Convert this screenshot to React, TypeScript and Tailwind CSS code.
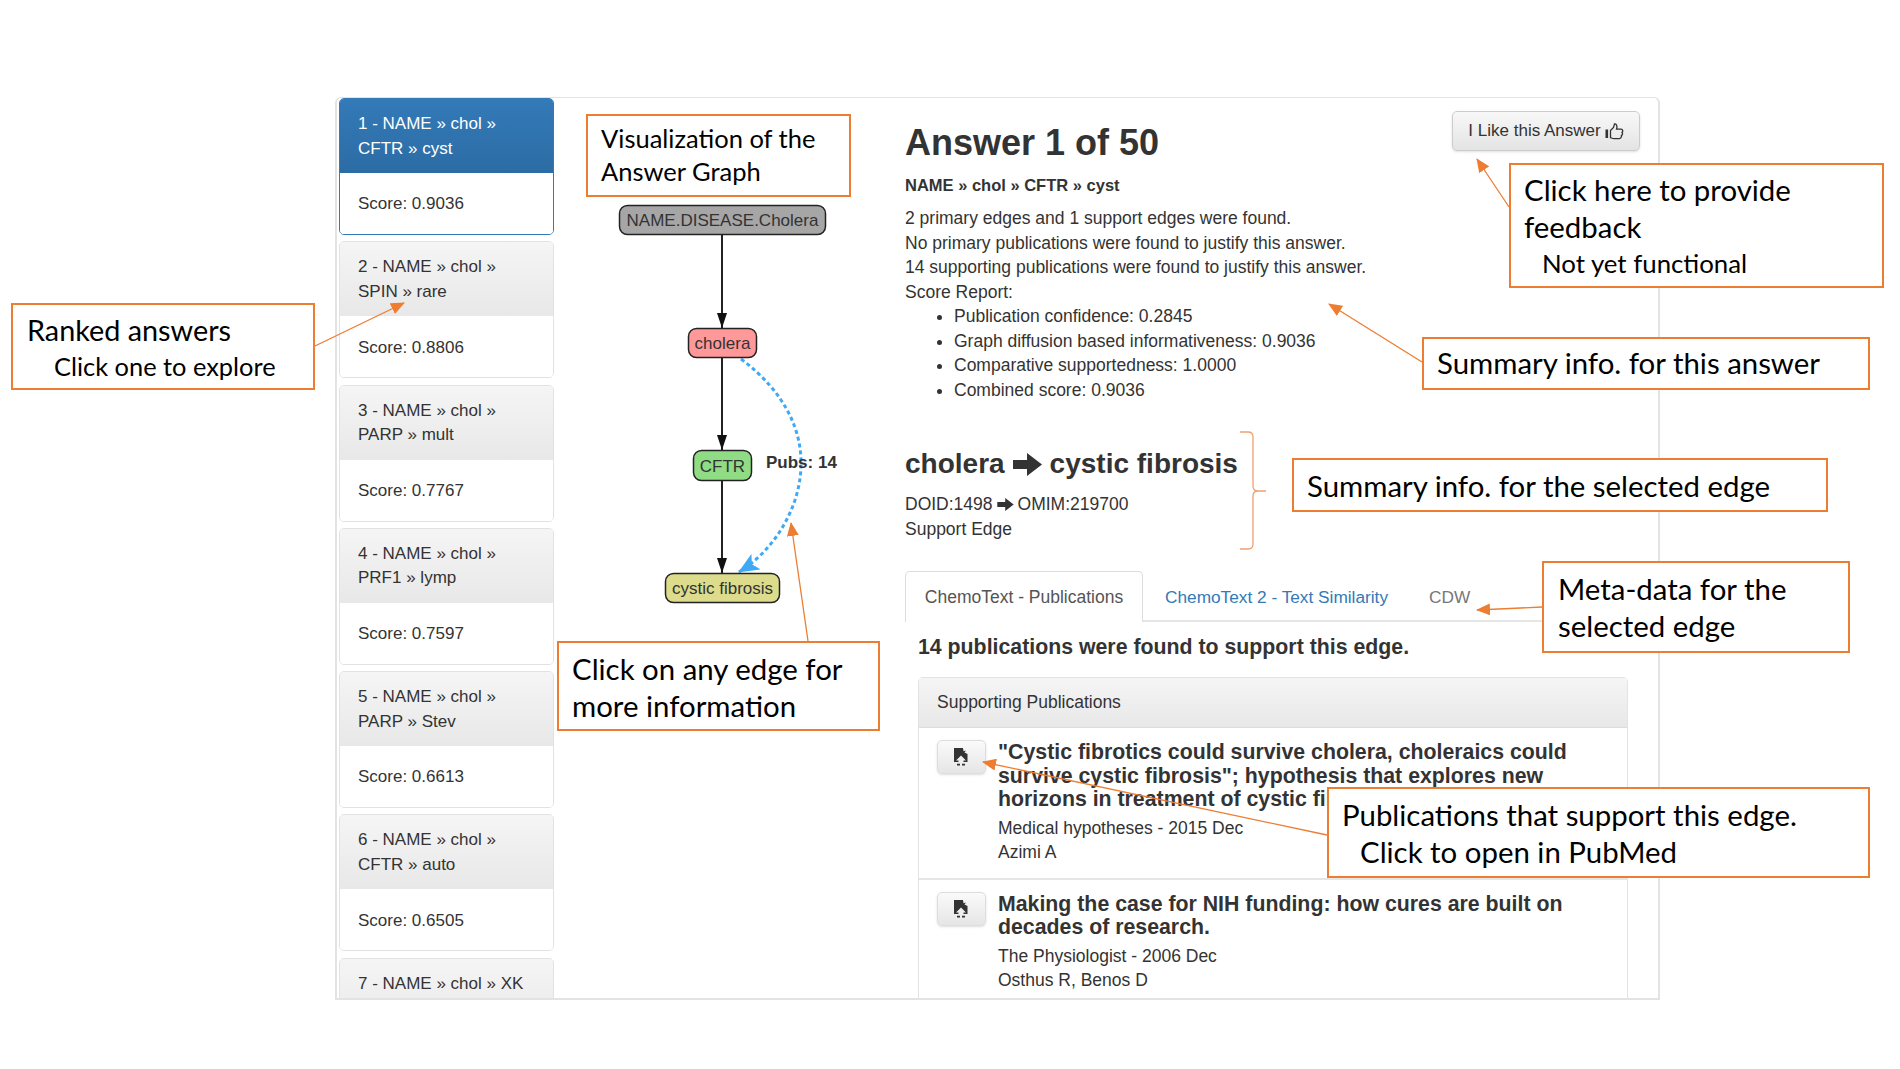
const ANSWERS = [
  { lines: ["1 - NAME » chol »", "CFTR » cyst"], score: "0.9036", active: true },
  { lines: ["2 - NAME » chol »", "SPIN » rare"], score: "0.8806" },
  { lines: ["3 - NAME » chol »", "PARP » mult"], score: "0.7767" },
  { lines: ["4 - NAME » chol »", "PRF1 » lymp"], score: "0.7597" },
  { lines: ["5 - NAME » chol »", "PARP » Stev"], score: "0.6613" },
  { lines: ["6 - NAME » chol »", "CFTR » auto"], score: "0.6505" },
  { lines: ["7 - NAME » chol » XK"] },
];

const PUBS = [
  {
    title: ['"Cystic fibrotics could survive cholera, choleraics could', 'survive cystic fibrosis"; hypothesis that explores new', "horizons in treatment of cystic fibrosis."],
    source: "Medical hypotheses - 2015 Dec",
    authors: "Azimi A",
  },
  {
    title: ["Making the case for NIH funding: how cures are built on", "decades of research."],
    source: "The Physiologist - 2006 Dec",
    authors: "Osthus R, Benos D",
  },
];

function AnswerCard({ lines, score, active }: { lines: string[]; score?: string; active?: boolean }) {
  return (
    <div
      className={`h-[137px] shrink-0 mb-[6.3px] flex flex-col rounded-[5px] border overflow-hidden ${
        active ? "border-[#337ab7]" : "border-[#e2e2e2]"
      }`}
    >
      <div
        className={`h-[74px] shrink-0 px-[18px] pt-[13px] leading-[24.5px] ${
          active ? "bg-gradient-to-b from-[#337ab7] to-[#2c6ca5] text-white" : "bg-gradient-to-b from-[#f5f5f5] to-[#e8e8e8] text-[#333]"
        }`}
      >
        {lines.map((l) => (
          <div key={l}>{l}</div>
        ))}
      </div>
      {score && <div className="flex-1 flex items-center px-[18px] pt-[2px] bg-white text-[#333]">Score: {score}</div>}
    </div>
  );
}

function AnswerGraph() {
  return (
    <svg className="block" width="351" height="520" viewBox="554 98 351 520" fontFamily="Liberation Sans, Arial, sans-serif">
      <defs>
        <marker id="blk" markerUnits="userSpaceOnUse" markerWidth="16" markerHeight="10" refX="15" refY="5" orient="auto">
          <path d="M0 0L15 5L0 10Z" fill="#111" />
        </marker>
        <marker id="blu" markerUnits="userSpaceOnUse" markerWidth="22" markerHeight="18" refX="20" refY="9" orient="auto">
          <path d="M0 0L21 9L0 18L5 9Z" fill="#3fa9f5" />
        </marker>
      </defs>
      <path d="M722 235V328" stroke="#222" strokeWidth="2" markerEnd="url(#blk)" />
      <path d="M722 358V450" stroke="#222" strokeWidth="2" markerEnd="url(#blk)" />
      <path d="M722 480V573" stroke="#222" strokeWidth="2" markerEnd="url(#blk)" />
      <path d="M741 359C785 392 802 430 801 466C800 510 772 552 739 572" fill="none" stroke="#3fa9f5" strokeWidth="3" strokeDasharray="4 3" markerEnd="url(#blu)" />
      <rect x="619.5" y="205.5" width="206" height="29" rx="8" fill="#a6a6a6" stroke="#222" strokeWidth="1.5" />
      <text x="722.5" y="226" textAnchor="middle" fontSize="17" fill="#333">NAME.DISEASE.Cholera</text>
      <rect x="688.5" y="328.5" width="68" height="29" rx="8" fill="#ff9999" stroke="#222" strokeWidth="1.5" />
      <text x="722.5" y="349" textAnchor="middle" fontSize="17" fill="#333">cholera</text>
      <rect x="693.5" y="450.5" width="58" height="30" rx="8" fill="#90dc85" stroke="#222" strokeWidth="1.5" />
      <text x="722.5" y="471.5" textAnchor="middle" fontSize="17" fill="#333">CFTR</text>
      <rect x="665.5" y="573.5" width="114" height="29" rx="8" fill="#dcdc8c" stroke="#222" strokeWidth="1.5" />
      <text x="722.5" y="594" textAnchor="middle" fontSize="17" fill="#333">cystic fibrosis</text>
      <text x="766" y="468" fontSize="17" fontWeight="700" fill="#333">Pubs: 14</text>
    </svg>
  );
}

function PubIcon() {
  return (
    <svg className="mr-[2px]" width="14" height="18" viewBox="0 0 14 18">
      <path d="M0 0H9L9.5 3.2L12 2.5L10.5 4.5L13.5 6V14H0Z" fill="#333" />
      <path d="M7 7.5L12 12.5H9.5V15H4.5V12.5H2Z" fill="#efefef" />
      <path d="M3 15.8H6V17.5H3ZM8 15.8H11V17.5H8Z" fill="#333" />
    </svg>
  );
}

function ThumbIcon() {
  return (
    <svg width="19" height="17" viewBox="0 0 19 17" fill="none" stroke="#333" strokeWidth="1.3">
      <rect x="0.5" y="6.5" width="2.6" height="8.5" fill="#333" stroke="none" />
      <path d="M5.5 7.5L8.5 4.5L9.5 1C11.5 0.5 12.5 3 11.5 6.2H16C18 6.2 18.2 8.5 17 9.2C18 10.2 17.5 12 16.4 12.4C16.8 13.8 15.8 15.6 14.4 15.6H9C7 15.6 6.5 14.6 5.5 14.6Z" />
    </svg>
  );
}

// Block arrow used between the two ends of an edge
function EdgeArrow({ className }: { className: string }) {
  return (
    <svg className={`inline-block ${className}`} viewBox="0 0 29 23" fill="#333">
      <path d="M0 7H14V0L29 11.5L14 23V16H0Z" />
    </svg>
  );
}

function Note({ className, children }: { className: string; children: React.ReactNode }) {
  return (
    <div className={`absolute bg-white border-2 border-[#ed7d31] text-black font-['Lato',sans-serif] text-[29.4px] leading-[37px] whitespace-nowrap ${className}`}>
      {children}
    </div>
  );
}

function Callouts() {
  const arrows = [
    "M315 346L404 303",
    "M808 641L791 523",
    "M1509 207L1477 159",
    "M1422 362L1329 304",
    "M1542 607L1477 610",
    "M1327 835L983 762",
  ];
  return (
    <svg className="absolute left-0 top-0 pointer-events-none" width="1900" height="1069" viewBox="0 0 1900 1069">
      <defs>
        <marker id="org" markerUnits="userSpaceOnUse" markerWidth="14" markerHeight="12" refX="13" refY="6" orient="auto">
          <path d="M0 0L14 6L0 12Z" fill="#ed7d31" />
        </marker>
      </defs>
      {arrows.map((d) => (
        <path key={d} d={d} stroke="#ed7d31" strokeWidth="1.3" fill="none" markerEnd="url(#org)" />
      ))}
      {/* Brace around the edge summary */}
      <path d="M1240 432H1248Q1253 432 1253 437V486Q1253 491 1258 491H1266M1258 491Q1253 491 1253 496V544Q1253 549 1248 549H1240" stroke="#f0a070" strokeWidth="1.3" fill="none" />
    </svg>
  );
}

export default function App() {
  return (
    <div className="relative w-[1900px] h-[1069px] bg-white overflow-hidden font-['Liberation_Sans',Arial,sans-serif] text-[17px] leading-[24.5px] text-[#333]">
      <div className="pt-[97px] pl-[335px]">
        <div className="w-[1325px] h-[903px] flex border-x-2 border-b-2 border-t border-[#e3e3e3] rounded-t-[6px] overflow-hidden">
          {/* Answers */}
          <aside className="w-[217px] shrink-0 pl-[2px] flex flex-col">
            {ANSWERS.map((a) => (
              <AnswerCard key={a.lines[0]} {...a} />
            ))}
          </aside>

          {/* Graph */}
          <div className="w-[351px] shrink-0">
            <AnswerGraph />
          </div>

          {/* Detail */}
          <main className="w-[735px] shrink-0 text-[17.5px]">
            <div className="flex justify-between items-start pt-[13px]">
              <h1 className="mt-[12px] text-[36px] leading-[40px] font-bold">Answer 1 of 50</h1>
              <button className="h-[40px] w-[188px] flex items-center justify-center gap-[4px] rounded-[5px] border border-[#ccc] bg-gradient-to-b from-[#f8f8f8] to-[#e4e4e4] shadow-sm text-[17px]">
                I Like this Answer
                <ThumbIcon />
              </button>
            </div>
            <p className="mt-[10px] text-[16.5px] font-bold">NAME » chol » CFTR » cyst</p>
            <div className="mt-[8.5px]">
              <p>2 primary edges and 1 support edges were found.</p>
              <p>No primary publications were found to justify this answer.</p>
              <p>14 supporting publications were found to justify this answer.</p>
              <p>Score Report:</p>
              <ul className="list-disc pl-[49px]">
                <li>Publication confidence: 0.2845</li>
                <li>Graph diffusion based informativeness: 0.9036</li>
                <li>Comparative supportedness: 1.0000</li>
                <li>Combined score: 0.9036</li>
              </ul>
            </div>

            <h2 className="mt-[45px] text-[28px] leading-[34px] font-bold flex items-center">
              cholera
              <EdgeArrow className="w-[29px] h-[23px] mx-[8px]" />
              cystic fibrosis
            </h2>
            <p className="mt-[11px] flex items-center">
              DOID:1498
              <EdgeArrow className="w-[17px] h-[13px] mx-[4px]" />
              OMIM:219700
            </p>
            <p>Support Edge</p>

            {/* Tabs */}
            <div className="mt-[30px] w-[723px] h-[51px] flex border-b-2 border-[#e6e6e6]">
              <div className="w-[238px] h-[51px] flex items-center justify-center rounded-t-[5px] border-x border-t border-[#ddd] bg-white text-[#555]">
                ChemoText - Publications
              </div>
              <div className="ml-[22px] pt-[3px] flex items-center text-[17.25px] text-[#337ab7]">ChemoText 2 - Text Similarity</div>
              <div className="ml-[41px] pt-[3px] flex items-center text-[17.25px] text-[#777]">CDW</div>
            </div>

            <p className="mt-[11px] ml-[13px] text-[21.3px] leading-[28px] font-bold">14 publications were found to support this edge.</p>

            {/* Publications */}
            <div className="mt-[16px] ml-[13px] w-[710px] border-x border-t border-[#e3e3e3] rounded-t-[5px]">
              <div className="h-[50px] flex items-center px-[18px] bg-gradient-to-b from-[#f5f5f5] to-[#e8e8e8] border-b border-[#ddd]">
                Supporting Publications
              </div>
              {PUBS.map((p) => (
                <div key={p.source} className="flex pl-[18px] pt-[12px] pb-[13px] border-b-2 border-[#e6e6e6]">
                  <button className="w-[49px] h-[34px] shrink-0 flex items-center justify-center rounded-[5px] border border-[#ddd] bg-gradient-to-b from-[#fafafa] to-[#e6e6e6] shadow-sm">
                    <PubIcon />
                  </button>
                  <div className="ml-[12px] pt-[1px]">
                    <div className="text-[21.3px] leading-[23.5px] font-bold whitespace-nowrap">
                      {p.title.map((t) => (
                        <div key={t}>{t}</div>
                      ))}
                    </div>
                    <div className="mt-[4px]">
                      <p>{p.source}</p>
                      <p>{p.authors}</p>
                    </div>
                  </div>
                </div>
              ))}
            </div>
          </main>
        </div>
      </div>

      <Callouts />

      <Note className="left-[11px] top-[303px] w-[304px] h-[87px] pl-[14px] pt-[7px]">
        <div className="text-[28.8px]">Ranked answers</div>
        <div className="pl-[27px] text-[25.4px] leading-[34px]">Click one to explore</div>
      </Note>
      <Note className="left-[586px] top-[114px] w-[265px] h-[83px] pl-[13px] pt-[6px]">
        <div className="text-[25.5px] leading-[33px]">
          Visualization of the
          <br />
          Answer Graph
        </div>
      </Note>
      <Note className="left-[557px] top-[641px] w-[323px] h-[90px] pl-[13px] pt-[7px]">
        Click on any edge for
        <br />
        more information
      </Note>
      <Note className="left-[1509px] top-[163px] w-[375px] h-[125px] pl-[13px] pt-[6px]">
        Click here to provide
        <br />
        feedback
        <div className="pl-[18px] text-[25.8px] leading-[36px]">Not yet functional</div>
      </Note>
      <Note className="left-[1422px] top-[337px] w-[448px] h-[53px] pl-[13px] pt-[5px]">Summary info. for this answer</Note>
      <Note className="left-[1292px] top-[458px] w-[536px] h-[54px] pl-[13px] pt-[7px]">Summary info. for the selected edge</Note>
      <Note className="left-[1542px] top-[561px] w-[308px] h-[92px] pl-[14px] pt-[7px]">
        Meta-data for the
        <br />
        selected edge
      </Note>
      <Note className="left-[1327px] top-[787px] w-[543px] h-[91px] pl-[13px] pt-[7px]">
        Publications that support this edge.
        <div className="pl-[18px]">Click to open in PubMed</div>
      </Note>
    </div>
  );
}
